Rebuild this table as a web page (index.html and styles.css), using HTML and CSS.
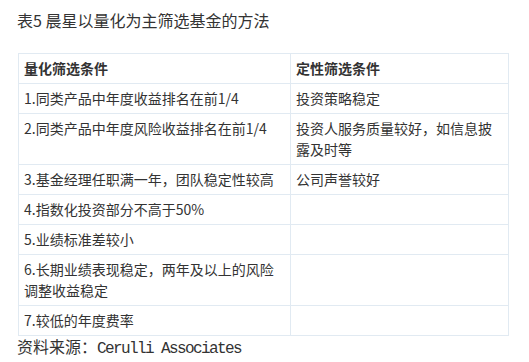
FILE: index.html
```html
<!DOCTYPE html>
<html lang="zh">
<head>
<meta charset="utf-8">
<link rel="stylesheet" href="styles.css">
</head>
<body>
<div class="page">
  <h1 class="title">表5 晨星以量化为主筛选基金的方法</h1>
  <table class="grid">
    <colgroup><col class="c1"><col class="c2"></colgroup>
    <thead>
      <tr><th>量化筛选条件</th><th>定性筛选条件</th></tr>
    </thead>
    <tbody>
      <tr><td>1.同类产品中年度收益排名在前1/4</td><td>投资策略稳定</td></tr>
      <tr><td class="top">2.同类产品中年度风险收益排名在前1/4</td><td>投资人服务质量较好，如信息披露及时等</td></tr>
      <tr><td>3.基金经理任职满一年，团队稳定性较高</td><td>公司声誉较好</td></tr>
      <tr><td>4.指数化投资部分不高于50%</td><td></td></tr>
      <tr><td>5.业绩标准差较小</td><td></td></tr>
      <tr><td>6.长期业绩表现稳定，两年及以上的风险调整收益稳定</td><td></td></tr>
      <tr><td>7.较低的年度费率</td><td></td></tr>
    </tbody>
  </table>
  <p class="source">资料来源：<span class="mono">Cerulli Associates</span></p>
</div>
</body>
</html>
```
FILE: styles.css
```css
html, body {
  margin: 0;
  padding: 0;
  background: #fff;
}
.page {
  padding: 8px 0 0 17px;
  font-family: "Noto Sans CJK SC", "Noto Sans", sans-serif;
  color: #333;
}
.title {
  margin: 0 0 21px 0;
  font-size: 16px;
  line-height: 24px;
  font-weight: normal;
  color: #333;
}
.grid {
  margin-left: 1px;
  border-collapse: collapse;
  width: 491px;
  table-layout: fixed;
  font-size: 14px;
}
.c1 { width: 272px; }
.grid th, .grid td {
  border: 1px solid #e1eaf2;
  padding: 4px 5px;
  line-height: 21px;
  text-align: left;
  vertical-align: top;
}
.grid th {
  font-weight: bold;
  color: #333;
}
.source {
  margin: 0;
  font-size: 16px;
  line-height: 20px;
  color: #333;
}
.mono {
  font-family: "Liberation Mono", monospace;
  letter-spacing: -1.6px;
}
```
